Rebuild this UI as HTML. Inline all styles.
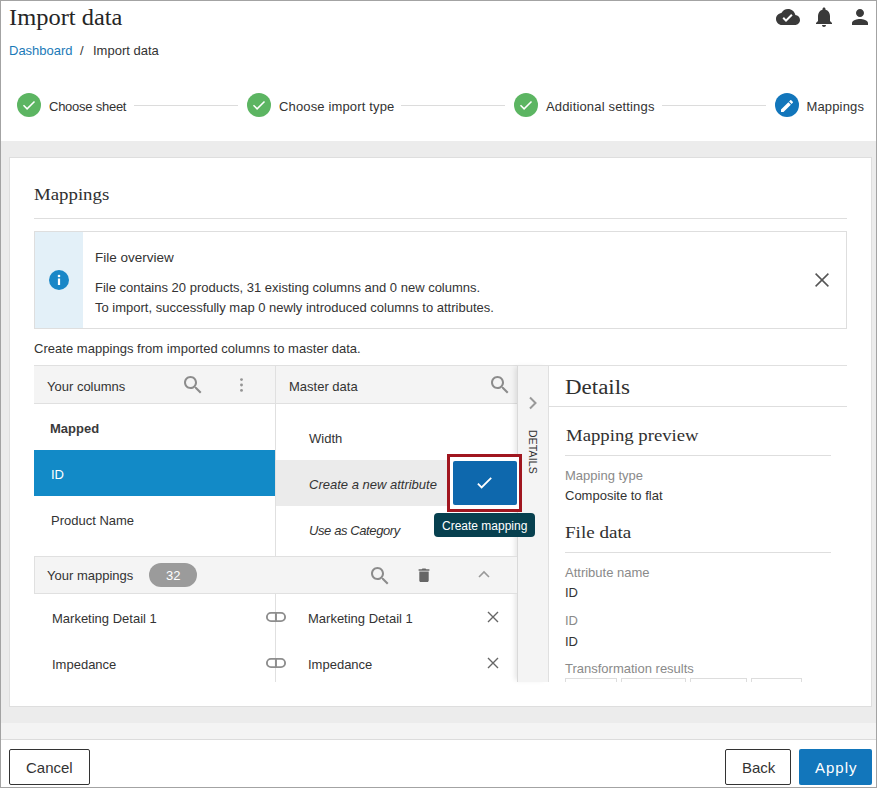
<!DOCTYPE html>
<html><head><meta charset="utf-8">
<style>
*{box-sizing:border-box;margin:0;padding:0}
html,body{width:877px;height:788px;overflow:hidden;background:#fff}
body{position:relative;font-family:"Liberation Sans",sans-serif;color:#333;font-size:13px}
.a{position:absolute}
.t{position:absolute;line-height:1;white-space:nowrap;font-size:13px}
.sf{font-family:"Liberation Serif",serif}
.frame{position:absolute;left:0;top:0;width:877px;height:788px;border:1px solid #a3a3a3;z-index:50;pointer-events:none}
.circ{position:absolute;width:24px;height:24px;border-radius:50%;background:#5cb562;top:93px}
.line{position:absolute;height:1px;background:#dcdcdc;top:105px;width:104px}
.hl{position:absolute;height:1px;background:#dedede}
.vl{position:absolute;width:1px;background:#e0e0e0}
.gray{color:#8a8a8a}
</style></head><body>
<div class="frame"></div>

<!-- header -->
<div class="t sf" style="left:8.5px;top:7.2px;font-size:22.5px;color:#262626;transform-origin:0 0;transform:scaleX(1.087)">Import data</div>
<svg class="a" style="left:776px;top:5px" width="24" height="24" viewBox="0 0 24 24"><path fill="#3a3a3a" d="M19.35 10.04C18.67 6.59 15.64 4 12 4 9.11 4 6.6 5.64 5.35 8.04 2.34 8.36 0 10.91 0 14c0 3.31 2.69 6 6 6h13c2.76 0 5-2.24 5-5 0-2.64-2.05-4.78-4.65-4.96zM10 17l-3.5-3.5 1.41-1.41L10 14.17 15.18 9l1.41 1.41L10 17z"/></svg>
<svg class="a" style="left:812px;top:5px" width="24" height="24" viewBox="0 0 24 24"><path fill="#3a3a3a" d="M12 22c1.1 0 2-.9 2-2h-4c0 1.1.89 2 2 2zm6-6v-5c0-3.07-1.64-5.64-4.5-6.32V4c0-.83-.67-1.5-1.5-1.5s-1.5.67-1.5 1.5v.68C7.63 5.36 6 7.92 6 11v5l-2 2v1h16v-1l-2-2z"/></svg>
<svg class="a" style="left:848px;top:5px" width="24" height="24" viewBox="0 0 24 24"><path fill="#3a3a3a" d="M12 12c2.21 0 4-1.79 4-4s-1.79-4-4-4-4 1.79-4 4 1.79 4 4 4zm0 2c-2.67 0-8 1.34-8 4v2h16v-2c0-2.66-5.33-4-8-4z"/></svg>

<div class="t" style="left:9px;top:44px;color:#1a7ab8">Dashboard</div>
<div class="t" style="left:80px;top:44px;color:#333">/</div>
<div class="t" style="left:93px;top:44px;color:#333">Import data</div>

<!-- stepper -->
<div class="circ" style="left:17px"></div>
<svg class="a" style="left:17px;top:93px" width="24" height="24" viewBox="0 0 24 24"><path d="M6.5 12.3l3.6 3.6 7.4-7.4" fill="none" stroke="#fff" stroke-width="1.5"/></svg>
<div class="t" style="left:49px;top:100px;letter-spacing:-0.25px">Choose sheet</div>
<div class="line" style="left:134px"></div>
<div class="circ" style="left:247px"></div>
<svg class="a" style="left:247px;top:93px" width="24" height="24" viewBox="0 0 24 24"><path d="M6.5 12.3l3.6 3.6 7.4-7.4" fill="none" stroke="#fff" stroke-width="1.5"/></svg>
<div class="t" style="left:279px;top:100px;letter-spacing:0.15px">Choose import type</div>
<div class="line" style="left:401px"></div>
<div class="circ" style="left:514px"></div>
<svg class="a" style="left:514px;top:93px" width="24" height="24" viewBox="0 0 24 24"><path d="M6.5 12.3l3.6 3.6 7.4-7.4" fill="none" stroke="#fff" stroke-width="1.5"/></svg>
<div class="t" style="left:546px;top:100px;letter-spacing:0.16px">Additional settings</div>
<div class="line" style="left:662px"></div>
<div class="circ" style="left:775px;background:#1276bb"></div>
<svg class="a" style="left:779px;top:97.5px" width="16" height="16" viewBox="0 0 24 24"><path fill="#fff" d="M3 17.25V21h3.75L17.81 9.94l-3.75-3.75L3 17.25zM20.71 7.04c.39-.39.39-1.020 0-1.41l-2.34-2.34c-.39-.39-1.02-.39-1.41 0l-1.83 1.83 3.75 3.75 1.83-1.83z"/></svg>
<div class="t" style="left:806.5px;top:100px;letter-spacing:0.15px">Mappings</div>

<!-- gray area -->
<div class="a" style="left:0;top:141px;width:877px;height:582px;background:#ececec"></div>
<div class="a" style="left:0;top:723px;width:877px;height:16px;background:#f4f4f4"></div>
<div class="a" style="left:0;top:739px;width:877px;height:1px;background:#dcdcdc"></div>

<!-- card -->
<div class="a" style="left:9px;top:157px;width:863px;height:550px;background:#fff;border:1px solid #dedede"></div>
<div class="t sf" style="left:33.5px;top:186.2px;font-size:17.5px;color:#303030;transform-origin:0 0;transform:scaleX(1.075)">Mappings</div>
<div class="hl" style="left:34px;top:218px;width:813px"></div>

<!-- info box -->
<div class="a" style="left:34px;top:231px;width:813px;height:98px;border:1px solid #dedede;background:#fff"></div>
<div class="a" style="left:35px;top:232px;width:48px;height:96px;background:#e3f0f8"></div>
<svg class="a" style="left:49px;top:270px" width="20" height="20" viewBox="0 0 20 20"><circle cx="10" cy="10" r="10" fill="#1a87c7"/><rect x="8.9" y="8.5" width="2.2" height="6.5" fill="#fff"/><circle cx="10" cy="6" r="1.3" fill="#fff"/></svg>
<div class="t" style="left:95px;top:250.5px;font-size:13.5px">File overview</div>
<div class="t" style="left:95px;top:281px">File contains 20 products, 31 existing columns and 0 new columns.</div>
<div class="t" style="left:95px;top:301px">To import, successfully map 0 newly introduced columns to attributes.</div>
<svg class="a" style="left:814px;top:272px" width="16" height="16" viewBox="0 0 16 16"><path d="M1.6 1.6L14.4 14.4M14.4 1.6L1.6 14.4" stroke="#555" stroke-width="1.5"/></svg>

<div class="t" style="left:34px;top:342px;letter-spacing:0.03px">Create mappings from imported columns to master data.</div>

<!-- table header -->
<div class="a" style="left:34px;top:365px;width:483px;height:39px;background:#f4f4f4;border-top:1px solid #e0e0e0;border-bottom:1px solid #e0e0e0"></div>
<div class="t" style="left:47px;top:380px">Your columns</div>
<svg class="a" style="left:181px;top:373px" width="24" height="24" viewBox="0 0 24 24"><path fill="#8c8c8c" d="M15.5 14h-.79l-.28-.27C15.41 12.59 16 11.11 16 9.5 16 5.91 13.09 3 9.5 3S3 5.910 3 9.5 5.91 16 9.5 16c1.61 0 3.09-.59 4.23-1.57l.27.28v.79l5 4.99L20.49 19l-4.99-5zm-6 0C7.01 14 5 11.99 5 9.5S7.01 5 9.5 5 14 7.01 14 9.5 11.99 14 9.5 14z"/></svg>
<svg class="a" style="left:236px;top:375px" width="11" height="20" viewBox="0 0 11 20"><circle cx="5.5" cy="4.6" r="1.45" fill="#959595"/><circle cx="5.5" cy="10" r="1.45" fill="#959595"/><circle cx="5.5" cy="15.4" r="1.45" fill="#959595"/></svg>
<div class="t" style="left:289px;top:380px">Master data</div>
<svg class="a" style="left:488px;top:373px" width="24" height="24" viewBox="0 0 24 24"><path fill="#8c8c8c" d="M15.5 14h-.79l-.28-.27C15.41 12.59 16 11.11 16 9.5 16 5.91 13.09 3 9.5 3S3 5.910 3 9.5 5.91 16 9.5 16c1.61 0 3.09-.59 4.23-1.57l.27.28v.79l5 4.99L20.490 19l-4.99-5zm-6 0C7.01 14 5 11.99 5 9.5S7.01 5 9.5 5 14 7.01 14 9.5 11.99 14 9.5 14z"/></svg>
<div class="vl" style="left:275px;top:365px;height:192px"></div>

<!-- left column rows -->
<div class="t" style="left:50px;top:422px;font-weight:bold;color:#3a3a3a">Mapped</div>
<div class="a" style="left:34px;top:450px;width:241px;height:46px;background:#128ac7"></div>
<div class="t" style="left:51px;top:468px;color:#fff">ID</div>
<div class="t" style="left:51px;top:514px">Product Name</div>

<!-- master rows -->
<div class="t" style="left:309px;top:432px">Width</div>
<div class="a" style="left:276px;top:460px;width:241px;height:46px;background:#ebebeb"></div>
<div class="t" style="left:309px;top:478px;font-style:italic">Create a new attribute</div>
<div class="t" style="left:309px;top:524px;font-style:italic;letter-spacing:-0.4px">Use as Category</div>

<!-- details strip -->
<div class="a" style="left:517px;top:365px;width:32px;height:317px;background:#f4f4f4;border-top:1px solid #e0e0e0;border-left:1px solid #d9d9d9;border-right:1px solid #e0e0e0;box-shadow:-4px 0 5px -2px rgba(0,0,0,0.10)"></div>
<svg class="a" style="left:527px;top:396px" width="12" height="14" viewBox="0 0 12 14"><path d="M3 1.5l5.5 5.5-5.5 5.5" fill="none" stroke="#999" stroke-width="2"/></svg>
<div class="t" style="left:526.5px;top:430px;font-size:10.5px;transform-origin:0 0;transform:translate(11px,0) rotate(90deg);letter-spacing:0.12px">DETAILS</div>

<!-- create mapping button -->
<div class="a" style="left:447px;top:454px;width:75px;height:58px;border:3px solid #a0161f;background:#fff"></div>
<div class="a" style="left:453px;top:461px;width:64px;height:44px;background:#0e68ad;border-radius:2px"></div>
<svg class="a" style="left:473px;top:471px" width="24" height="24" viewBox="0 0 24 24"><path d="M4.9 12.7l3.7 3.7 9.6-9.6" fill="none" stroke="#fff" stroke-width="1.8"/></svg>
<div class="a" style="left:434px;top:513px;width:101px;height:24px;background:#07404f;border-radius:4px"></div>
<div class="t" style="left:442px;top:520px;font-size:12px;color:#fff">Create mapping</div>

<!-- bottom border of list -->
<div class="hl" style="left:34px;top:556px;width:483px;background:#e0e0e0"></div>

<!-- your mappings header -->
<div class="a" style="left:34px;top:556px;width:483px;height:38px;background:#f4f4f4;border:1px solid #e0e0e0;border-right:none"></div>
<div class="t" style="left:47px;top:569px">Your mappings</div>
<div class="a" style="left:149px;top:563px;width:48px;height:24px;border-radius:12px;background:#9b9b9b"></div>
<div class="t" style="left:166px;top:569px;color:#fff">32</div>
<svg class="a" style="left:368px;top:564px" width="24" height="24" viewBox="0 0 24 24"><path fill="#8c8c8c" d="M15.5 14h-.79l-.28-.27C15.41 12.59 16 11.11 16 9.5 16 5.91 13.09 3 9.5 3S3 5.910 3 9.5 5.91 16 9.5 16c1.61 0 3.09-.59 4.23-1.57l.27.28v.79l5 4.99L20.49 19l-4.99-5zm-6 0C7.01 14 5 11.990 5 9.5S7.01 5 9.5 5 14 7.01 14 9.5 11.99 14 9.5 14z"/></svg>
<svg class="a" style="left:418px;top:568px" width="12" height="14" viewBox="0 0 12 14"><path fill="#666" d="M1.3 3.6h9.4v8.9c0 .8-.6 1.5-1.4 1.5H2.7c-.8 0-1.4-.7-1.4-1.5zM.6 1.3h3.1l.8-.9h3l.8.9h3.1v1.5H.6z"/></svg>
<svg class="a" style="left:477px;top:569px" width="14" height="10" viewBox="0 0 14 10"><path d="M2 8l5-5 5 5" fill="none" stroke="#999" stroke-width="1.6"/></svg>

<!-- mapping rows -->
<div class="vl" style="left:275px;top:594px;height:88px"></div>
<div class="t" style="left:52px;top:612px">Marketing Detail 1</div>
<svg class="a" style="left:265px;top:611px" width="22" height="12" viewBox="0 0 22 12"><rect x="1.9" y="1.9" width="18.2" height="8.2" rx="4.1" fill="#fff" stroke="#8e8e8e" stroke-width="1.9"/><rect x="9.95" y="1.5" width="2" height="9" fill="#8e8e8e"/></svg>
<div class="t" style="left:308px;top:612px">Marketing Detail 1</div>
<svg class="a" style="left:487px;top:611px" width="12" height="12" viewBox="0 0 12 12"><path d="M1 1l10 10M11 1L1 11" stroke="#666" stroke-width="1.4"/></svg>
<div class="t" style="left:52px;top:658px">Impedance</div>
<svg class="a" style="left:265px;top:657px" width="22" height="12" viewBox="0 0 22 12"><rect x="1.9" y="1.9" width="18.2" height="8.2" rx="4.1" fill="#fff" stroke="#8e8e8e" stroke-width="1.9"/><rect x="9.95" y="1.5" width="2" height="9" fill="#8e8e8e"/></svg>
<div class="t" style="left:308px;top:658px">Impedance</div>
<svg class="a" style="left:487px;top:657px" width="12" height="12" viewBox="0 0 12 12"><path d="M1 1l10 10M11 1L1 11" stroke="#666" stroke-width="1.4"/></svg>

<!-- details panel -->
<div class="hl" style="left:549px;top:365px;width:298px;background:#e0e0e0"></div>
<div class="t sf" style="left:565px;top:376.7px;font-size:20.5px;color:#303030;transform-origin:0 0;transform:scaleX(1.12)">Details</div>
<div class="hl" style="left:549px;top:406px;width:298px"></div>
<div class="t sf" style="left:565.5px;top:427.4px;font-size:17.5px;color:#303030;transform-origin:0 0;transform:scaleX(1.07)">Mapping preview</div>
<div class="hl" style="left:565px;top:455px;width:266px"></div>
<div class="t gray" style="left:565px;top:469px">Mapping type</div>
<div class="t" style="left:565px;top:489px">Composite to flat</div>
<div class="t sf" style="left:565px;top:524.2px;font-size:17.5px;color:#303030;transform-origin:0 0;transform:scaleX(1.09)">File data</div>
<div class="hl" style="left:565px;top:552px;width:266px"></div>
<div class="t gray" style="left:565px;top:566px">Attribute name</div>
<div class="t" style="left:565px;top:586px">ID</div>
<div class="t gray" style="left:565px;top:614px">ID</div>
<div class="t" style="left:565px;top:634.5px">ID</div>
<div class="t gray" style="left:565px;top:662px">Transformation results</div>
<div class="a" style="left:565px;top:678px;width:52px;height:4px;border:1px solid #ddd;border-bottom:none"></div>
<div class="a" style="left:621px;top:678px;width:65px;height:4px;border:1px solid #ddd;border-bottom:none"></div>
<div class="a" style="left:690px;top:678px;width:57px;height:4px;border:1px solid #ddd;border-bottom:none"></div>
<div class="a" style="left:751px;top:678px;width:51px;height:4px;border:1px solid #ddd;border-bottom:none"></div>

<!-- footer -->
<div class="a" style="left:9px;top:749px;width:81px;height:36px;border:1px solid #333;border-radius:2px;background:#fff"></div>
<div class="t" style="left:26px;top:760px;font-size:15px">Cancel</div>
<div class="a" style="left:725px;top:749px;width:66px;height:36px;border:1px solid #333;border-radius:2px;background:#fff"></div>
<div class="t" style="left:742px;top:760px;font-size:15px">Back</div>
<div class="a" style="left:799px;top:749px;width:73px;height:36px;border-radius:2px;background:#1276bb"></div>
<div class="t" style="left:815px;top:760px;font-size:15px;color:#fff;letter-spacing:1px">Apply</div>
</body></html>
